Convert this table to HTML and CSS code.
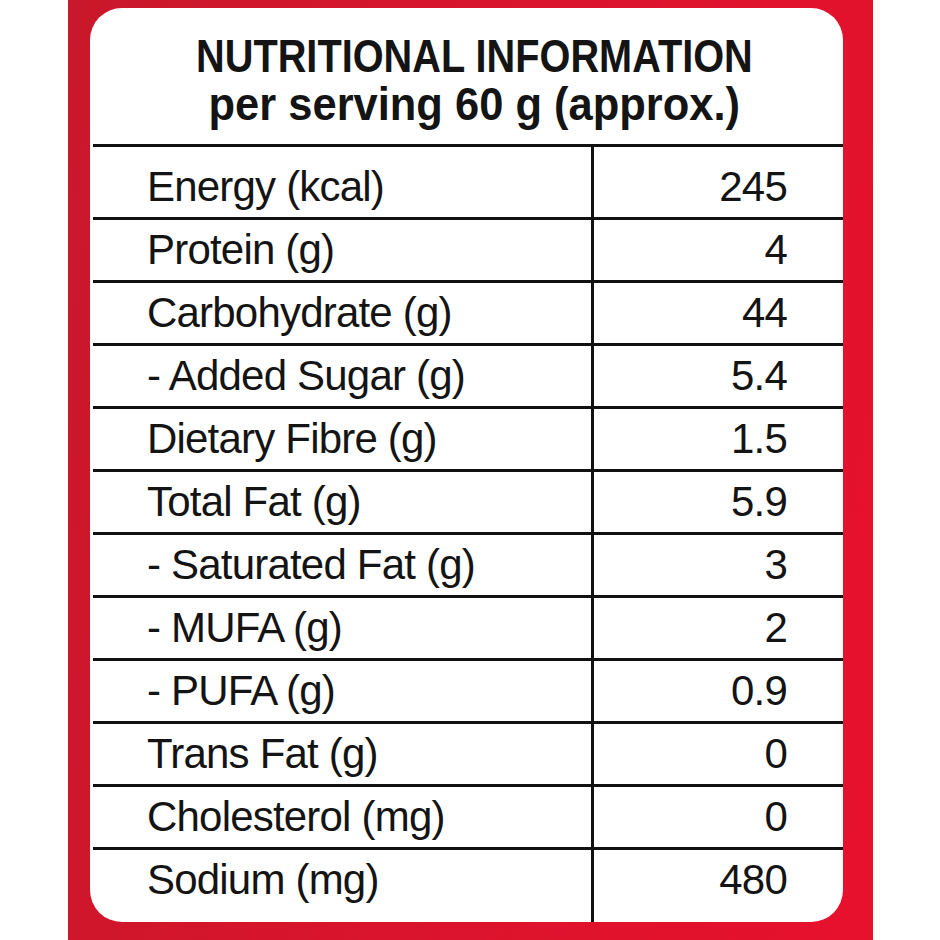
FILE: index.html
```html
<!DOCTYPE html>
<html lang="en">
<head>
<meta charset="utf-8">
<title>Nutritional Information</title>
<link rel="stylesheet" href="styles.css">
</head>
<body>
<div class="page">
  <div class="frame">
    <div class="card">
      <div class="header">
        <div class="title-line"><span class="t1">NUTRITIONAL INFORMATION</span></div>
        <div class="title-line"><span class="t2">per serving 60 g (approx.)</span></div>
      </div>
      <div class="rows">
        <div class="row first"><div class="label">Energy (kcal)</div><div class="value">245</div></div>
        <div class="row"><div class="label">Protein (g)</div><div class="value">4</div></div>
        <div class="row"><div class="label">Carbohydrate (g)</div><div class="value">44</div></div>
        <div class="row"><div class="label">- Added Sugar (g)</div><div class="value">5.4</div></div>
        <div class="row"><div class="label">Dietary Fibre (g)</div><div class="value">1.5</div></div>
        <div class="row"><div class="label">Total Fat (g)</div><div class="value">5.9</div></div>
        <div class="row"><div class="label">- Saturated Fat (g)</div><div class="value">3</div></div>
        <div class="row"><div class="label">- MUFA (g)</div><div class="value">2</div></div>
        <div class="row"><div class="label">- PUFA (g)</div><div class="value">0.9</div></div>
        <div class="row"><div class="label">Trans Fat (g)</div><div class="value">0</div></div>
        <div class="row"><div class="label">Cholesterol (mg)</div><div class="value">0</div></div>
        <div class="row last"><div class="label">Sodium (mg)</div><div class="value">480</div></div>
      </div>
    </div>
  </div>
</div>
</body>
</html>
```
FILE: styles.css
```css
html, body {
  margin: 0;
  padding: 0;
  background: #ffffff;
}

.page {
  width: 940px;
  height: 940px;
  display: flex;
  overflow: hidden;
}

.frame {
  margin-left: 68px;
  width: 805px;
  height: 940px;
  box-sizing: border-box;
  padding: 8px 30px 18px 22px;
  background: linear-gradient(100deg, #c9182b 0%, #d8142c 45%, #e8112d 100%);
}

.card {
  height: 914px;
  background: #ffffff;
  border-radius: 32px;
  display: flex;
  flex-direction: column;
  overflow: hidden;
  font-family: "Liberation Sans", Arial, sans-serif;
  color: #141414;
}

.header {
  height: 139px;
  flex: none;
  box-sizing: border-box;
  padding: 24px 0 0 12px;
  border-bottom: 3px solid #111;
  margin-left: 3px;
  text-align: center;
  font-weight: 700;
  font-size: 47px;
  line-height: 48px;
}

.title-line {
  height: 48px;
}

.t1 {
  display: inline-block;
  transform: scaleX(0.845);
  white-space: nowrap;
}

.t2 {
  display: inline-block;
  transform: scaleX(0.925);
  white-space: nowrap;
}

.rows {
  flex: 1;
  display: flex;
  flex-direction: column;
}

.row {
  display: grid;
  grid-template-columns: 498px 1fr;
  height: 60px;
  flex: none;
  border-bottom: 3px solid #111;
  margin-left: 3px;
  font-size: 42px;
  line-height: 60px;
  letter-spacing: -0.8px;
}

.row.first {
  height: 70px;
}

.row.first .label,
.row.first .value {
  padding-top: 10px;
}

.row.last {
  flex: 1;
  border-bottom: none;
}

.label {
  padding-left: 54px;
  white-space: nowrap;
}

.value {
  border-left: 3px solid #111;
  text-align: right;
  padding-right: 56px;
  white-space: nowrap;
}
```
